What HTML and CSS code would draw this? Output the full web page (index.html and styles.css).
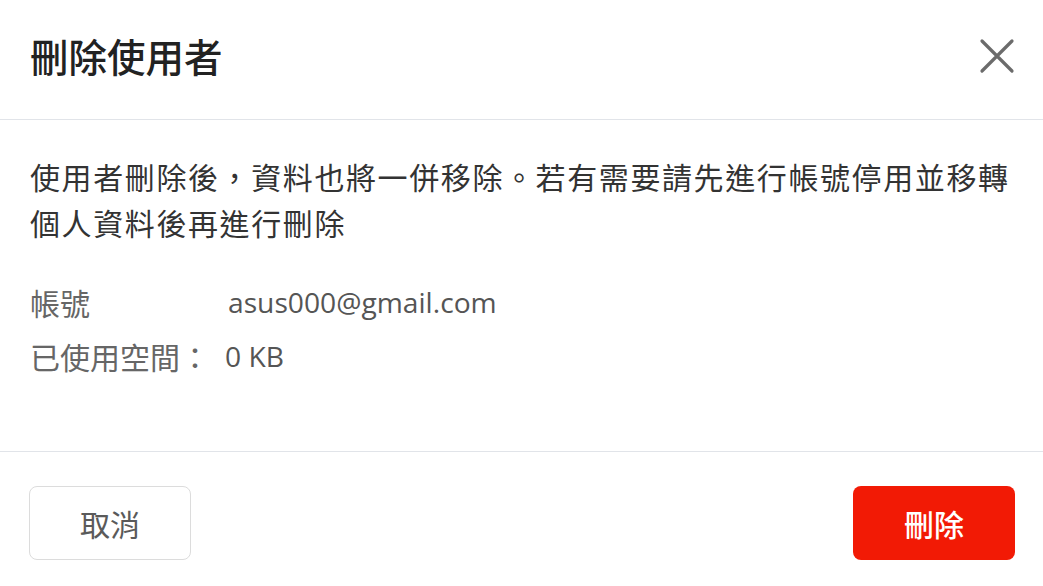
FILE: index.html
```html
<!DOCTYPE html>
<html lang="zh-Hant">
<head>
<meta charset="utf-8">
<link rel="stylesheet" href="styles.css">
</head>
<body>
<div class="dialog">
  <header class="dlg-header">
    <h1 class="dlg-title">刪除使用者</h1>
    <button class="dlg-close" aria-label="close">
      <svg width="36" height="36" viewBox="0 0 36 36"><path d="M3 3 L33 33 M33 3 L3 33" stroke="#6b6b6b" stroke-width="3.2" stroke-linecap="round" fill="none"/></svg>
    </button>
  </header>
  <section class="dlg-body">
    <p class="dlg-msg">使用者刪除後，資料也將一併移除。若有需要請先進行帳號停用並移轉個人資料後再進行刪除</p>
    <div class="info">
      <div class="info-row"><span class="info-label">帳號</span><span class="info-value">asus000@gmail.com</span></div>
      <div class="info-row"><span class="info-label-full">已使用空間：</span><span class="info-value">0 KB</span></div>
    </div>
  </section>
  <footer class="dlg-footer">
    <button class="btn btn-cancel">取消</button>
    <button class="btn btn-delete">刪除</button>
  </footer>
</div>
</body>
</html>
```

FILE: styles.css
```css
* { box-sizing: border-box; }
html, body { margin: 0; padding: 0; background: #fff; }
body {
  font-family: "Noto Sans CJK TC", "Noto Sans", sans-serif;
  width: 1043px;
  height: 586px;
  overflow: hidden;
}
.dialog {
  display: flex;
  flex-direction: column;
  height: 586px;
}
.dlg-header {
  height: 120px;
  display: flex;
  align-items: center;
  justify-content: space-between;
  padding: 0 28px 8px 30px;
  border-bottom: 1px solid #e1e4e9;
}
.dlg-title {
  margin: 0;
  font-size: 38.5px;
  font-weight: 500;
  color: #222;
  line-height: 1;
}
.dlg-close {
  border: none;
  background: none;
  padding: 0;
  width: 36px;
  height: 36px;
  display: flex;
}
.dlg-body {
  padding: 33px 30px 0 30px;
  height: 332px;
  border-bottom: 1px solid #e1e4e9;
}
.dlg-msg {
  margin: 0;
  font-size: 30px;
  letter-spacing: 1.6px;
  line-height: 46px;
  color: #333;
}
.info {
  margin-top: 30px;
  display: flex;
  flex-direction: column;
}
.info-row {
  display: flex;
  align-items: center;
  height: 54px;
  color: #666;
}
.info-label {
  width: 198px;
  font-size: 30px;
}
.info-label-full {
  font-size: 30px;
  margin-right: 15px;
}
.info-value {
  font-family: "Open Sans", "Noto Sans", sans-serif;
  font-size: 28.2px;
  color: #555;
}
.dlg-footer {
  flex: 1;
  display: flex;
  justify-content: space-between;
  align-items: flex-start;
  padding: 34px 28px 0 29px;
}
.btn {
  height: 74px;
  width: 162px;
  border-radius: 8px;
  font-family: "Noto Sans CJK TC", sans-serif;
  font-size: 30px;
  cursor: pointer;
}
.btn-cancel {
  background: #fff;
  border: 1px solid #dcdcdc;
  color: #5a5a5a;
}
.btn-delete {
  background: #f21a05;
  border: none;
  color: #fff;
  font-weight: 500;
}
```
